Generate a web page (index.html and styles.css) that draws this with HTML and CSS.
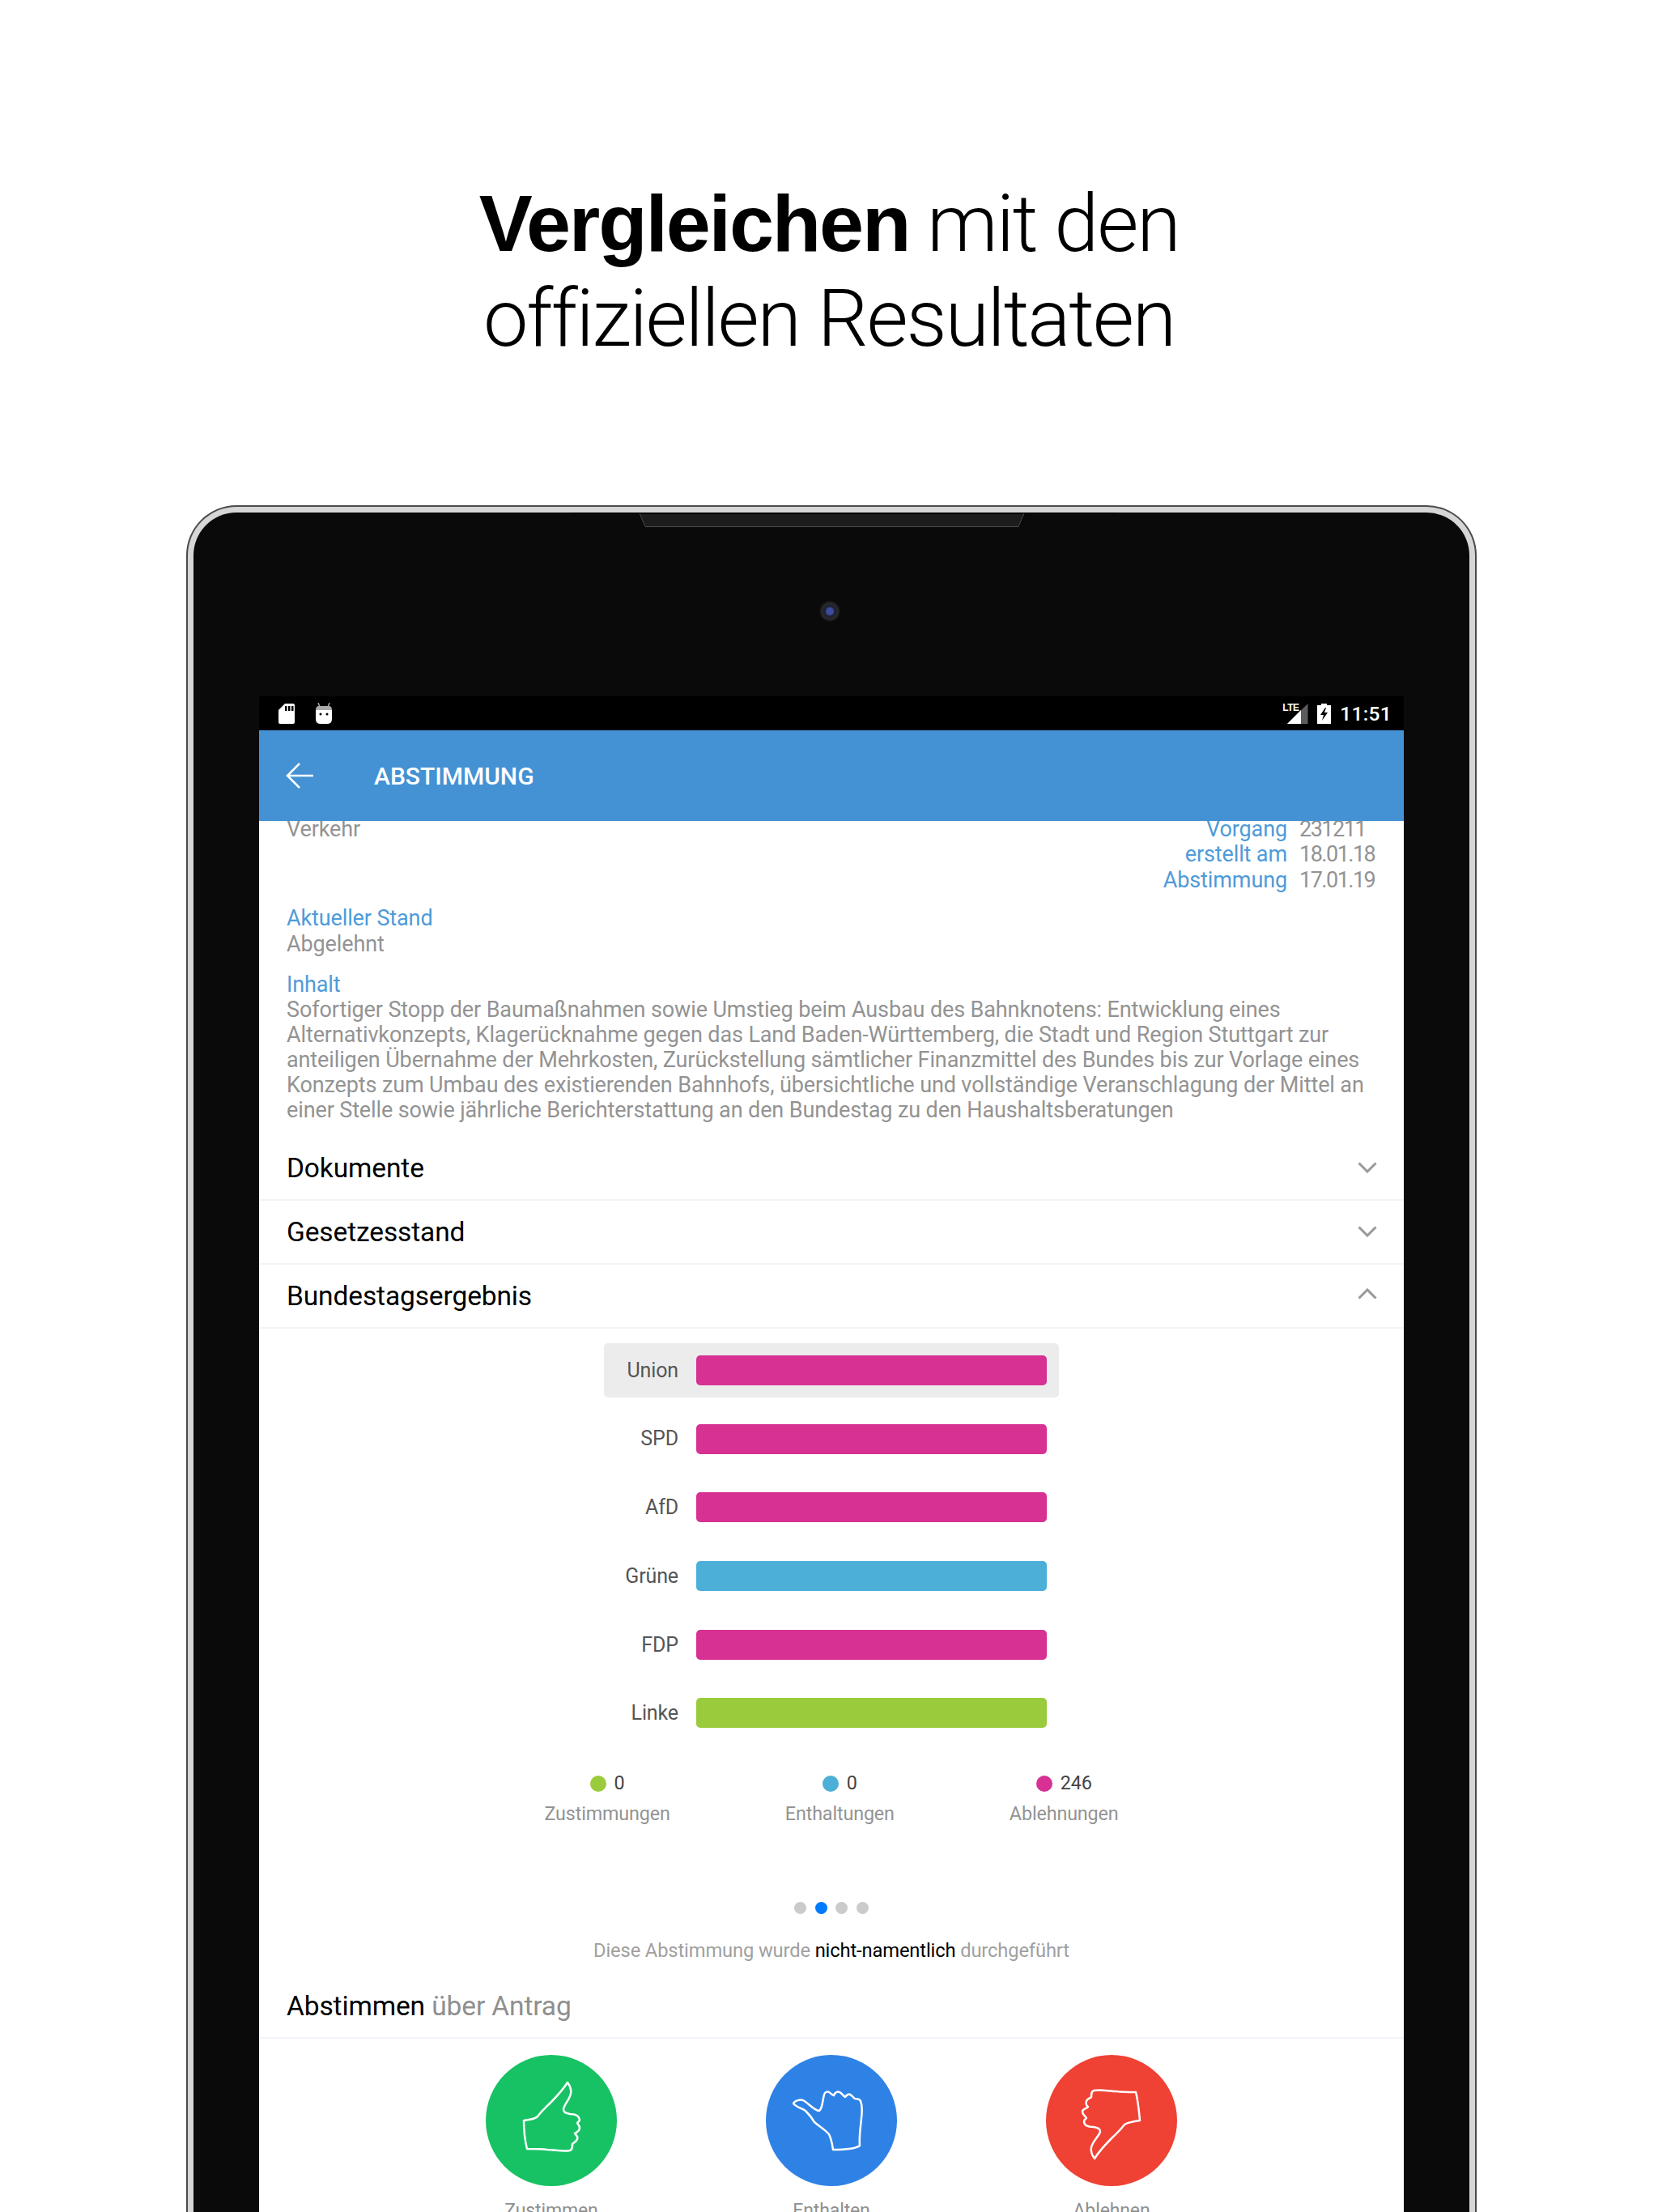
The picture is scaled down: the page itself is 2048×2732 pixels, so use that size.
FILE: index.html
```html
<!DOCTYPE html>
<html lang="de">
<head>
    <meta charset="UTF-8">
    <title>Abstimmung</title>
    <link rel="stylesheet" href="styles.css">
</head>
<body>
    <header class="headline">
        <h1><b>Vergleichen</b> mit den<br>offiziellen Resultaten</h1>
    </header>

    <div class="tablet">
        <svg class="speaker" viewBox="0 0 675 20" preserveAspectRatio="none">
            <path d="M0 1H84L92 18H553L562 1H675V0H0Z" fill="#000"/>
            <path d="M85 2L92 17H553L560 2Z" fill="#1c1c1c"/>
            <path d="M85 1L92 17.500H553L560 1" fill="none" stroke="#4a4a4a" stroke-width="1"/>
        </svg>
        <span class="camera"></span>

        <div class="screen">
            <div class="statusbar">
                <div class="status-left">
                    <svg width="20" height="25" viewBox="0 0 20 25"><path d="M8 0H18Q20 0 20 2V23Q20 25 18 25H2Q0 25 0 23V8Z" fill="#fff"/><path d="M8 3h2.500v6H8zM12 3h2.500v6H12zM16 3h2.500v6H16z" fill="#000"/></svg>
                    <svg width="22" height="26" viewBox="0 0 22 26"><path d="M4 0L6 5M18 0L16 5" stroke="#aaa" stroke-width="1.500"/><path d="M5 4H17Q21 4 21 9H1Q1 4 5 4Z" fill="#aaa"/><path d="M1 9H21V20Q21 26 15 26H7Q1 26 1 20Z" fill="#fff"/><circle cx="7" cy="14" r="1.500" fill="#000"/><circle cx="15" cy="14" r="1.500" fill="#000"/></svg>
                </div>
                <div class="status-right">
                    <span class="signal">
                        <span class="lte">LTE</span>
                        <svg width="26" height="25" viewBox="0 0 26 25"><path d="M25.500 0V25H0Z" fill="#5c5c5c"/><path d="M17 8V25H0Z" fill="#fff"/></svg>
                    </span>
                    <svg width="17" height="25" viewBox="0 0 17 25"><path d="M5 0H12V2H17V25H0V2H5Z" fill="#fff"/><path d="M10 5L4 14H8L6 21L13 11H9L11 5Z" fill="#000"/></svg>
                    <span class="time">11:51</span>
                </div>
            </div>

            <div class="appbar">
                <svg class="back" width="34" height="32" viewBox="0 0 34 32"><path d="M34 16H2M17 1L2 16L17 31" fill="none" stroke="#fff" stroke-width="2.500"/></svg>
                <span class="appbar-title">ABSTIMMUNG</span>
            </div>

            <div class="content">
                <div class="info">
                    <div class="top-row">
                        <span class="muted">Verkehr</span>
                        <div class="meta">
                            <span class="label">Vorgang</span><span class="muted num">231211</span>
                            <span class="label">erstellt am</span><span class="muted num">18.01.18</span>
                            <span class="label">Abstimmung</span><span class="muted num">17.01.19</span>
                        </div>
                    </div>
                    <div class="block-stand">
                        <div class="label">Aktueller Stand</div>
                        <div class="muted">Abgelehnt</div>
                    </div>
                    <div class="block-inhalt">
                        <div class="label">Inhalt</div>
                        <p class="muted">Sofortiger Stopp der Baumaßnahmen sowie Umstieg beim Ausbau des Bahnknotens: Entwicklung eines<br>Alternativkonzepts, Klagerücknahme gegen das Land Baden-Württemberg, die Stadt und Region Stuttgart zur<br>anteiligen Übernahme der Mehrkosten, Zurückstellung sämtlicher Finanzmittel des Bundes bis zur Vorlage eines<br>Konzepts zum Umbau des existierenden Bahnhofs, übersichtliche und vollständige Veranschlagung der Mittel an<br>einer Stelle sowie jährliche Berichterstattung an den Bundestag zu den Haushaltsberatungen</p>
                    </div>
                </div>

                <div class="section first">
                    <span>Dokumente</span>
                    <svg class="chevron" width="24" height="14" viewBox="0 0 24 14"><path d="M1.500 1.500L12 12L22.500 1.500" fill="none" stroke="#999" stroke-width="3"/></svg>
                </div>
                <div class="section">
                    <span>Gesetzesstand</span>
                    <svg class="chevron" width="24" height="14" viewBox="0 0 24 14"><path d="M1.500 1.500L12 12L22.500 1.500" fill="none" stroke="#999" stroke-width="3"/></svg>
                </div>
                <div class="section">
                    <span>Bundestagsergebnis</span>
                    <svg class="chevron up" width="24" height="14" viewBox="0 0 24 14"><path d="M1.500 12.500L12 2L22.500 12.500" fill="none" stroke="#999" stroke-width="3"/></svg>
                </div>

                <div class="chart">
                    <div class="bar-row active"><span class="party">Union</span><span class="bar pink"></span></div>
                    <div class="bar-row"><span class="party">SPD</span><span class="bar pink"></span></div>
                    <div class="bar-row"><span class="party">AfD</span><span class="bar pink"></span></div>
                    <div class="bar-row"><span class="party">Grüne</span><span class="bar blue"></span></div>
                    <div class="bar-row"><span class="party">FDP</span><span class="bar pink"></span></div>
                    <div class="bar-row"><span class="party">Linke</span><span class="bar green"></span></div>
                </div>

                <div class="legend">
                    <div class="legend-item">
                        <div class="count"><i class="dot green"></i>0</div>
                        <div class="legend-label">Zustimmungen</div>
                    </div>
                    <div class="legend-item">
                        <div class="count"><i class="dot blue"></i>0</div>
                        <div class="legend-label">Enthaltungen</div>
                    </div>
                    <div class="legend-item">
                        <div class="count"><i class="dot pink"></i>246</div>
                        <div class="legend-label">Ablehnungen</div>
                    </div>
                </div>

                <div class="pager">
                    <i></i><i class="current"></i><i></i><i></i>
                </div>

                <p class="note">Diese Abstimmung wurde <b>nicht-namentlich</b> durchgeführt</p>

                <div class="section vote-head">
                    <span>Abstimmen <em>über Antrag</em></span>
                </div>

                <div class="votes">
                    <div class="vote">
                        <div class="vote-btn yes">
                            <svg width="162" height="162" viewBox="0 0 162 162"><path d="M51 116C48 104 47 92 47 81C55 80 61 79 64 76C70 68 73 66 79 60C87 52 96 42 101 34C104 38 106 43 105 48C103 56 97 61 96 67C96 71 99 72 104 73C109 73 115 74 116 80C116 82 114 83 113 84C115 87 116 88 116 90C116 94 113 95 110 97C113 100 114 102 113 104C112 107 109 108 107 110C107 114 107 117 104 118C95 120 85 117 76 117C68 116 59 116 51 116Z" fill="none" stroke="#fff" stroke-width="2.500" stroke-linejoin="round"/></svg>
                        </div>
                        <span>Zustimmen</span>
                    </div>
                    <div class="vote">
                        <div class="vote-btn neutral">
                            <svg width="162" height="162" viewBox="0 0 162 162"><path d="M34 60C36 56 42 55 46 56C52 59 60 69 66 69C70 66 70 56 72 49C73 45 77 45 78 46C80 47 81 49 84 50C85 46 89 45 91 46C94 47 95 50 98 52C100 49 103 48 104 49C107 50 108 53 110 54C114 54 116 55 117 57C119 62 119 70 118 78C117 90 115 100 116 112C111 116 95 117 83 117C82 110 81 104 78 98C73 92 68 90 60 83C57 78 54 74 49 69C44 66 37 64 34 60Z" fill="none" stroke="#fff" stroke-width="2.500" stroke-linejoin="round"/></svg>
                        </div>
                        <span>Enthalten</span>
                    </div>
                    <div class="vote">
                        <div class="vote-btn no">
                            <svg width="162" height="162" viewBox="0 0 162 162"><path d="M111 46C114 58 115 70 116 81C108 82 102 83 97 86C91 94 88 96 82 102C74 110 65 120 60 128C57 124 55 119 56 114C58 106 65 101 67 95C67 91 64 90 59 89C53 89 47 88 47 82C47 80 49 79 50 78C48 75 45 74 45 70C45 66 50 67 52 64C49 62 49 60 50 57C51 54 54 54 56 52C56 48 56 45 59 44C68 42 78 45 87 45C95 46 103 46 111 46Z" fill="none" stroke="#fff" stroke-width="2.500" stroke-linejoin="round"/></svg>
                        </div>
                        <span>Ablehnen</span>
                    </div>
                </div>
            </div>
        </div>
    </div>
</body>
</html>
```

FILE: styles.css
```css
*{
    padding: 0;
    margin: 0;
    box-sizing: border-box;
}

html,body{
    width: 2048px;
    height: 2732px;
    overflow: hidden;
    background: #fff;
}

body{
    font-family: Roboto, "Liberation Sans", sans-serif;
}

.headline{
    padding-top: 217px;
    height: 626px;
    text-align: center;
}

.headline h1{
    font-family: Roboto, sans-serif;
    font-size: 99px;
    line-height: 117px;
    font-weight: 300;
    color: #000;
    letter-spacing: -2.200px;
}

.headline b{
    font-family: "Liberation Sans", sans-serif;
    font-weight: 700;
    letter-spacing: -2.200px;
}

/* tablet frame */
.tablet{
    position: relative;
    width: 1590px;
    height: 2200px;
    margin-left: 232px;
    padding: 227px 81px 0;
    background: #0a0a0a;
    border: 7px solid #d6d6d6;
    border-bottom: 0;
    border-radius: 60px 60px 0 0;
    box-shadow: 0 0 0 2px #4a4a4a;
}

.speaker{
    position: absolute;
    left: 466px;
    top: 0;
    width: 675px;
    height: 20px;
}

.camera{
    position: absolute;
    left: 773px;
    top: 109px;
    width: 26px;
    height: 26px;
    border-radius: 50%;
    background: radial-gradient(circle, #3c4c9c 0 4px, #1c2030 6px, #2a2a2a 10px, #0c0c0c 13px);
}

.screen{
    width: 1414px;
    background: #fff;
}

.statusbar{
    height: 42px;
    background: #000;
    display: flex;
    justify-content: space-between;
    align-items: center;
    padding: 0 15px 0 24px;
    color: #fff;
}

.status-left{
    display: flex;
    align-items: center;
    gap: 25px;
}

.status-right{
    display: flex;
    align-items: center;
    gap: 11px;
}

.signal{
    position: relative;
    display: flex;
    padding-left: 6px;
}

.lte{
    position: absolute;
    left: 0;
    top: -1px;
    font-family: "Liberation Sans", sans-serif;
    font-size: 12px;
    line-height: 13px;
    font-weight: 700;
    letter-spacing: -0.500px;
}

.time{
    font-size: 24.500px;
    font-weight: 500;
    letter-spacing: 0.300px;
}

.appbar{
    height: 112px;
    background: #4492d4;
    display: flex;
    align-items: center;
    padding-left: 33px;
    color: #fff;
}

.back{
    margin-right: 75px;
}

.appbar-title{
    font-size: 30px;
    font-weight: 500;
}

/* scroll area */
.content{
    height: 1800px;
    overflow: hidden;
    font-size: 27px;
    line-height: 31.400px;
    letter-spacing: -0.120px;
}

.info{
    margin-top: -5px;
    padding: 0 34px;
}

.info p{
    line-height: 30.900px;
}

.muted{
    color: #939393;
}

.label{
    color: #4f9bd9;
}

.top-row{
    display: flex;
    justify-content: space-between;
}

.meta{
    display: grid;
    grid-template-columns: auto 95px;
    column-gap: 15px;
}

.meta .label{
    text-align: right;
}

.num{
    letter-spacing: -1.500px;
}

.block-stand{
    margin-top: 16px;
}

.block-inhalt{
    margin-top: 19px;
}

.section{
    height: 79px;
    padding: 0 33px 0 34px;
    display: flex;
    align-items: center;
    justify-content: space-between;
    border-bottom: 2px solid #f1f5fa;
    font-size: 33.500px;
    color: #000;
}

.section.first{
    margin-top: 17px;
}

.section em{
    font-style: normal;
    color: #8f8f8f;
}

.chevron.up{
    margin-top: -4px;
}

/* bar chart */
.chart{
    width: 562px;
    margin: 18px 0 0 426px;
    display: flex;
    flex-direction: column;
    gap: 17.700px;
}

.bar-row{
    height: 67px;
    padding-right: 15px;
    display: flex;
    align-items: center;
    border-radius: 5px;
}

.bar-row.active{
    background: #ececec;
}

.party{
    width: 92px;
    text-align: right;
    margin-right: 22px;
    font-size: 25px;
    color: #555;
}

.bar{
    flex: 1;
    height: 37px;
    border-radius: 5px;
}

.pink{
    background: #d63193;
}

.blue{
    background: #4bafd8;
}

.green{
    background: #9acb3c;
}

.legend{
    margin-top: 38px;
    display: flex;
    justify-content: center;
    gap: 142px;
    font-size: 23.300px;
}

.legend-item{
    text-align: center;
}

.count{
    display: flex;
    justify-content: center;
    align-items: center;
    color: #444;
}

.dot{
    width: 20px;
    height: 20px;
    border-radius: 50%;
    margin-right: 10px;
}

.legend-label{
    margin-top: 6px;
    color: #939393;
}

.pager{
    margin-top: 93px;
    display: flex;
    justify-content: center;
    gap: 10.700px;
}

.pager i{
    width: 15px;
    height: 15px;
    border-radius: 50%;
    background: #cbcbcb;
}

.pager i.current{
    background: #007aff;
}

.note{
    margin-top: 30px;
    text-align: center;
    font-size: 23.700px;
    color: #a0a0a0;
}

.note b{
    font-weight: 400;
    color: #000;
}

.vote-head{
    margin-top: 13px;
    padding-top: 2px;
}

.votes{
    margin-top: 20px;
    display: flex;
    justify-content: center;
    gap: 184px;
}

.vote{
    width: 162px;
    display: flex;
    flex-direction: column;
    align-items: center;
    gap: 15px;
    font-size: 23px;
    color: #8f8f8f;
}

.vote-btn{
    width: 162px;
    height: 162px;
    border-radius: 50%;
}

.yes{
    background: #17c264;
}

.neutral{
    background: #2e82e6;
}

.no{
    background: #ef4134;
}
```
